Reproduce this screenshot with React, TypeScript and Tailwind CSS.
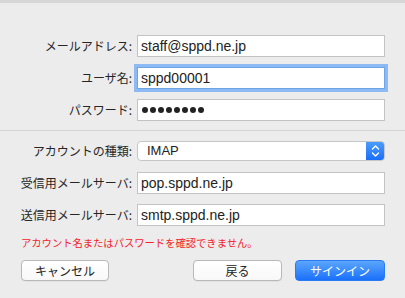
import React from "react";

const jp = { fontFamily: '"Noto Sans CJK JP", "Noto Sans", sans-serif' };
const lat = { fontFamily: '"Liberation Sans", "Noto Sans CJK JP", sans-serif' };

function Label({ children }: { children: React.ReactNode }) {
  return (
    <div className="w-[133px] text-right text-[12px] leading-[22px] text-[#262626] pr-[1px]" style={jp}>
      {children}
    </div>
  );
}

function Field({ value, focused }: { value: string; focused?: boolean }) {
  return (
    <div
      className={
        "ml-[4px] w-[248px] h-[22px] bg-white border flex items-center pl-[3px] text-[14px] text-[#222] " +
        (focused
          ? "border-[#6fa5e6] shadow-[0_0_0_3px_rgba(110,170,245,0.75)]"
          : "border-[#c3c3c3]")
      }
      style={lat}
    >
      {value}
    </div>
  );
}

function Row({ label, children }: { label: string; children: React.ReactNode }) {
  return (
    <div className="flex items-center h-[22px]">
      <Label>{label}</Label>
      {children}
    </div>
  );
}

export default function App() {
  return (
    <div className="w-[405px] h-[298px] bg-[#ececec] overflow-hidden relative">
      <div className="h-[3px] bg-[#d6d6d6]" />
      <div className="pt-[32px] flex flex-col gap-[10px]">
        <Row label="メールアドレス:">
          <Field value="staff@sppd.ne.jp" />
        </Row>
        <Row label="ユーザ名:">
          <Field value="sppd00001" focused />
        </Row>
        <Row label="パスワード:">
          <div className="ml-[4px] w-[248px] h-[22px] bg-white border border-[#c3c3c3] flex items-center pl-[4px] gap-[2px]">
            {Array.from({ length: 8 }).map((_, i) => (
              <span key={i} className="w-[6px] h-[6px] rounded-full bg-[#222] inline-block" />
            ))}
          </div>
        </Row>
      </div>
      <div className="mt-[9px] h-[1px] bg-[#d4d4d4]" />
      <div className="mt-[10px] flex items-center h-[20px]">
        <Label>アカウントの種類:</Label>
        <div className="ml-[4px] w-[248px] h-[20px] bg-white border border-[#c6c6c6] rounded-[4px] flex items-center overflow-hidden">
          <div className="flex-1 pl-[9px] text-[13px] text-[#222]" style={lat}>IMAP</div>
          <div className="w-[18px] h-full bg-gradient-to-b from-[#4b9bfb] to-[#1a6ef7] flex items-center justify-center">
            <svg width="9" height="14" viewBox="0 0 9 14" fill="none" stroke="white" strokeWidth="1.4" strokeLinecap="round" strokeLinejoin="round">
              <path d="M1.5 5 L4.5 2 L7.5 5" />
              <path d="M1.5 9 L4.5 12 L7.5 9" />
            </svg>
          </div>
        </div>
      </div>
      <div className="mt-[11px] flex flex-col gap-[10px]">
        <Row label="受信用メールサーバ:">
          <Field value="pop.sppd.ne.jp" />
        </Row>
        <Row label="送信用メールサーバ:">
          <Field value="smtp.sppd.ne.jp" />
        </Row>
      </div>
      <div className="mt-[10px] pl-[21px] text-[10.3px] leading-[14px] text-[#f5222a]" style={jp}>
        アカウント名またはパスワードを確認できません。
      </div>
      <div className="mt-[10px] flex items-center h-[21px]">
        <button
          className="ml-[21px] w-[88px] h-[21px] rounded-[4px] border border-[#b8b8b8] bg-gradient-to-b from-white to-[#f8f8f8] text-[12px] text-[#222] flex items-center justify-center shadow-[0_0.5px_0.5px_rgba(0,0,0,0.08)]"
          style={jp}
        >
          キャンセル
        </button>
        <button
          className="ml-[84px] w-[89px] h-[21px] rounded-[4px] border border-[#b8b8b8] bg-gradient-to-b from-white to-[#f8f8f8] text-[12px] text-[#222] flex items-center justify-center shadow-[0_0.5px_0.5px_rgba(0,0,0,0.08)]"
          style={jp}
        >
          戻る
        </button>
        <button
          className="ml-[13px] w-[90px] h-[21px] rounded-[4px] border border-[#2a7af5] bg-gradient-to-b from-[#5aa5fb] to-[#1a6ffb] text-[12px] text-white flex items-center justify-center"
          style={jp}
        >
          サインイン
        </button>
      </div>
    </div>
  );
}
